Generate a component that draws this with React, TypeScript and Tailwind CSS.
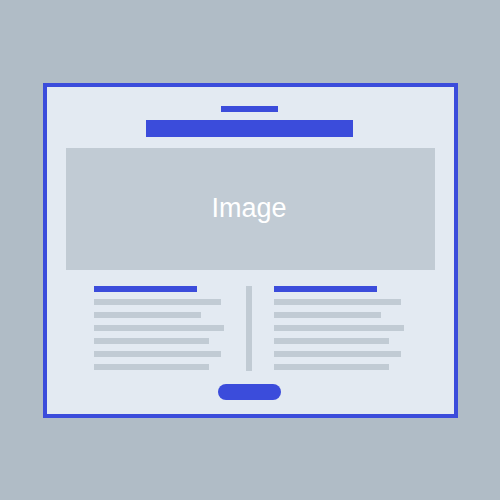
export default function App() {
  const widths = ['w-[127px]', 'w-[107px]', 'w-[130px]', 'w-[115px]', 'w-[127px]', 'w-[115px]'];

  const column = (
    <div className="flex w-[130px] flex-col gap-[7px]">
      <div className="h-[6px] w-[103px] bg-[#3b4cdb]" />
      {widths.map((w, i) => (
        <div key={i} className={`h-[6px] ${w} bg-[#c1cbd4]`} />
      ))}
    </div>
  );

  return (
    <div className="h-[500px] w-[500px] bg-[#b0bcc6] pl-[43px] pt-[83px]">
      <div className="flex h-[335px] w-[415px] flex-col items-center border-4 border-[#3b4cdb] bg-[#e3eaf2] px-[19px] pt-[19px]">
        <div className="mr-[2px] h-[6px] w-[57px] bg-[#3b4cdb]" />
        <div className="mr-[2px] mt-[8px] h-[17px] w-[207px] bg-[#3b4cdb]" />
        <div className="mt-[11px] flex h-[122px] w-full items-center justify-center bg-[#c1cbd4]">
          <span className="mb-[2px] mr-[3px] text-[27px] text-white" style={{ fontFamily: '"Liberation Sans", Arial, sans-serif' }}>
            Image
          </span>
        </div>
        <div className="mr-[4px] mt-[16px] flex gap-[22px]">
          {column}
          <div className="h-[85px] w-[6px] bg-[#c1cbd4]" />
          {column}
        </div>
        <div className="mr-[2px] mt-[13px] h-[16px] w-[63px] rounded-full bg-[#3b4cdb]" />
      </div>
    </div>
  );
}
